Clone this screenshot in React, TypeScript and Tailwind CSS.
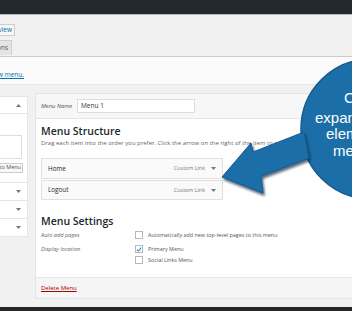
import React from "react";

function Tri({ up = false }: { up?: boolean }) {
  return (
    <svg width="5" height="3" viewBox="0 0 5 3" className="shrink-0">
      {up ? <polygon points="0,3 5,3 2.5,0" fill="#72777c" /> : <polygon points="0,0 5,0 2.5,3" fill="#72777c" />}
    </svg>
  );
}

function Check({ checked = false }: { checked?: boolean }) {
  return (
    <div className="w-[8px] h-[8px] shrink-0 border border-[#b4b9be] bg-white flex items-center justify-center">
      {checked && (
        <svg width="7" height="7" viewBox="0 0 10 10">
          <path d="M1.5 5.2 L4 7.6 L8.6 2" stroke="#1e8cbe" strokeWidth="1.8" fill="none" />
        </svg>
      )}
    </div>
  );
}

export default function App() {
  return (
    <div className="relative w-[352px] h-[311px] overflow-hidden bg-[#f1f1f1] flex flex-col font-['Open_Sans','Noto_Sans',sans-serif]">
      {/* top admin bar */}
      <div className="h-[14px] shrink-0 bg-[#23282d]" />
      {/* tabs area */}
      <div className="h-[43px] shrink-0 border-t border-b border-t-[#b5b8bb] border-b-[#cccccc] bg-[#f1f1f1] flex flex-col">
        <div className="mt-[9px] w-[15px] h-[12px] border border-[#cccccc] border-l-0 bg-[#f7f7f7] flex items-center justify-end pr-[2px] overflow-hidden">
          <span className="text-[6.5px] leading-none text-[#0073aa] whitespace-nowrap">Preview</span>
        </div>
        <div className="mt-[4px] w-[12px] h-[15px] border-t border-r border-[#cccccc] bg-[#e4e4e4] flex items-center justify-end pr-[3px] overflow-hidden">
          <span className="text-[6.5px] leading-none text-[#555] whitespace-nowrap">Locations</span>
        </div>
      </div>
      {/* manage menus bar */}
      <div className="h-[28px] shrink-0 bg-[#fbfbfb] border-b border-[#e5e5e5] flex items-end pb-[5px] overflow-hidden">
        <div className="w-[24px] flex justify-end overflow-hidden">
          <span className="text-[6.5px] leading-[8px] text-[#0073aa] underline whitespace-nowrap">create a new menu.</span>
        </div>
      </div>

      <div className="mt-[8px] flex items-start shrink-0">
        {/* left accordion */}
        <div className="mt-[3px] w-[28px] shrink-0 bg-white border-t border-r border-[#e5e5e5] flex flex-col">
          <div className="h-[17px] border-b border-[#e5e5e5] flex items-center justify-end pr-[6px]">
            <Tri up />
          </div>
          <div className="h-[69px] border-b border-[#e5e5e5] flex flex-col items-end pr-[5px]">
            <div className="mt-[21px] w-[22px] h-[24px] border border-l-0 border-[#dddddd] bg-white" />
            <div className="mt-[4px] -mr-[1px] w-[23px] h-[10px] border border-l-0 border-[#cccccc] bg-[#f7f7f7] flex items-center justify-end pr-[1px] overflow-hidden">
              <span className="text-[5.5px] leading-none text-[#555] whitespace-nowrap">Add to Menu</span>
            </div>
          </div>
          {[0, 1, 2].map((i) => (
            <div key={i} className="h-[18px] border-b border-[#e5e5e5] flex items-center justify-end pr-[6px]">
              <Tri />
            </div>
          ))}
        </div>

        {/* main menu edit panel */}
        <div className="ml-[7px] w-[330px] shrink-0 border border-[#e5e5e5] bg-white flex flex-col">
          <div className="h-[25px] bg-[#f7f7f7] border-b border-[#e5e5e5] flex items-center pl-[5px]">
            <span className="w-[36px] text-[5.8px] italic text-[#555] whitespace-nowrap">Menu Name</span>
            <div className="w-[118px] h-[14px] border border-[#dddddd] bg-white flex items-center pl-[3px]">
              <span className="text-[6.5px] text-[#32373c] whitespace-nowrap">Menu 1</span>
            </div>
          </div>
          <div className="h-[158px] flex flex-col pl-[5px] pt-[6px]">
            <div className="text-[10.5px] leading-[12px] font-semibold text-[#23282d] whitespace-nowrap">Menu Structure</div>
            <div className="mt-[2px] text-[6px] leading-[8px] text-[#666] whitespace-nowrap">
              Drag each item into the order you prefer. Click the arrow on the right of the item to reveal additional configuration options.
            </div>
            <div className="mt-[11px] w-[182px] h-[21px] border border-[#dfdfdf] bg-[#fafafa] flex items-center pl-[6px] pr-[6px]">
              <span className="text-[6.3px] font-medium text-[#23282d]">Home</span>
              <span className="ml-auto text-[5.4px] text-[#777]">Custom Link</span>
              <span className="ml-[6px]"><Tri /></span>
            </div>
            <div className="mt-[1px] w-[182px] h-[20px] border border-[#dfdfdf] bg-[#fafafa] flex items-center pl-[6px] pr-[6px]">
              <span className="text-[6.3px] font-medium text-[#23282d]">Logout</span>
              <span className="ml-auto text-[5.4px] text-[#777]">Custom Link</span>
              <span className="ml-[6px]"><Tri /></span>
            </div>
            <div className="mt-[15px] text-[10.5px] leading-[12px] font-semibold text-[#23282d] whitespace-nowrap">Menu Settings</div>
            <div className="mt-[3px] h-[10px] flex items-center">
              <span className="w-[94px] text-[5.6px] italic text-[#666] whitespace-nowrap">Auto add pages</span>
              <Check />
              <span className="ml-[5px] text-[5.4px] text-[#555] whitespace-nowrap">Automatically add new top-level pages to this menu</span>
            </div>
            <div className="mt-[4px] h-[10px] flex items-center">
              <span className="w-[94px] text-[5.6px] italic text-[#666] whitespace-nowrap">Display location</span>
              <Check checked />
              <span className="ml-[5px] text-[5.4px] text-[#555] whitespace-nowrap">Primary Menu</span>
            </div>
            <div className="mt-[1px] h-[10px] flex items-center pl-[94px]">
              <Check />
              <span className="ml-[5px] text-[5.4px] text-[#555] whitespace-nowrap">Social Links Menu</span>
            </div>
          </div>
          <div className="h-[21px] border-t border-[#e5e5e5] bg-[#f5f5f5] flex items-center pl-[5px]">
            <span className="text-[6px] text-[#a00] underline whitespace-nowrap">Delete Menu</span>
          </div>
        </div>
      </div>

      <div className="mt-auto h-[4px] shrink-0 bg-[#23282d]" />

      {/* callout overlay */}
      <svg className="absolute left-0 top-0 pointer-events-none" width="352" height="311" viewBox="0 0 352 311">
        <defs>
          <filter id="sh" x="-20%" y="-20%" width="140%" height="140%">
            <feDropShadow dx="1.5" dy="2.5" stdDeviation="1.2" floodColor="#0a2b45" floodOpacity="0.7" />
          </filter>
        </defs>
        <circle cx="371" cy="129" r="70" fill="#1c6ea9" stroke="#165a8c" strokeWidth="1.5" />
        <polygon
          points="222,177 251,143 253,152 304,132 309,158 261,176 263,193"
          fill="#1c6ea9"
          stroke="#165a8c"
          strokeWidth="1"
          filter="url(#sh)"
        />
      </svg>
      <div className="absolute inset-0 pointer-events-none font-['Liberation_Sans',Arial,sans-serif] text-white text-[15px] leading-none whitespace-nowrap">
        <div className="absolute left-[344px] top-[90px]">Click to</div>
        <div className="absolute left-[315px] top-[110px]">expand the</div>
        <div className="absolute left-[326px] top-[126px]">elements of</div>
        <div className="absolute left-[333px] top-[143px]">menu items</div>
      </div>
    </div>
  );
}
